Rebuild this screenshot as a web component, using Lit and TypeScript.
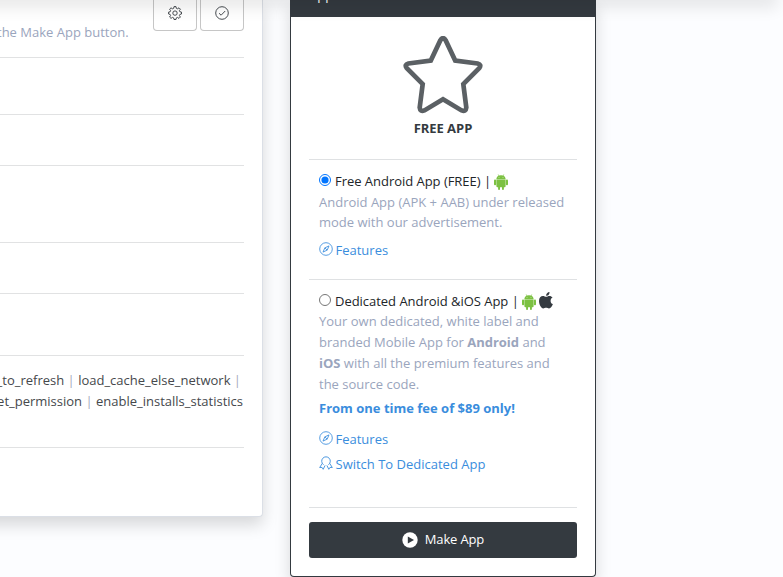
import { LitElement, html, css, svg } from "lit";
import { customElement } from "lit/decorators.js";

const gear = svg`<svg class="icon" width="14" height="14" viewBox="0 0 14 14" fill="none" stroke="currentColor" stroke-width=".9" stroke-linejoin="round"><path d="M6 .6h2l.3 1.700 1.300.5 1.400-1 1.400 1.400-1 1.400.5 1.200 1.600.3v1.900l-1.600.4-.5 1.200 1 1.400-1.400 1.400-1.400-1-1.300.5-.3 1.600H6l-.3-1.600-1.300-.5-1.400 1-1.400-1.400 1-1.400-.5-1.200L.6 8V6.100l1.500-.3.5-1.200-1-1.400L3 1.800l1.400 1 1.300-.5z"/><circle cx="7" cy="7.100" r="2.200"/></svg>`;
const check = svg`<svg class="icon" width="14" height="14" viewBox="0 0 14 14" fill="none" stroke="currentColor" stroke-width=".9"><circle cx="7" cy="7" r="6.300"/><path d="M4 7.200l2.100 2L10.200 5"/></svg>`;
const compass = svg`<svg class="icon" width="14" height="14" viewBox="0 0 14 14" fill="none" stroke="currentColor" stroke-width=".85"><circle cx="7" cy="7" r="6.300"/><path d="M10 3.900L8.200 8.100 4 10.100 5.800 5.900zM5.800 5.900l2.400 2.200"/></svg>`;
const ribbon = svg`<svg class="icon" width="14" height="14" viewBox="0 0 14 14" fill="none" stroke="currentColor" stroke-width=".9" stroke-linejoin="round"><path d="M4.600 8.700A4.300 4.300 0 1 1 9.400 8.700"/><path d="M3.300 7.400L.7 11.500l2.300-.1 1.200 1.900L6.100 9.400M10.700 7.400l2.600 4.100-2.300-.1-1.200 1.900L7.900 9.400"/></svg>`;
const android = svg`<svg class="android" width="14" height="16" viewBox="0 0 14 16" fill="#7cc142"><path d="M2.400 5.200C2.400 3.700 3.200 2.500 4.500 1.800L3.700.4l.4-.2.800 1.400a5.400 5.400 0 0 1 4.200 0L9.900.2l.4.200-.8 1.400c1.300.7 2.100 1.900 2.100 3.400z"/><path d="M2.400 5.500h9.200v6.700a1 1 0 0 1-1 1h-.7v1.900a.9.900 0 0 1-1.900 0v-1.900H6v1.900a.9.900 0 0 1-1.900 0v-1.900h-.7a1 1 0 0 1-1-1z"/><rect y="5.500" width="2.100" height="5.700" rx=".95"/><rect x="11.900" y="5.500" width="2.100" height="5.700" rx=".95"/><circle cx="5" cy="3.600" r=".45" fill="#fff"/><circle cx="9" cy="3.600" r=".45" fill="#fff"/></svg>`;
const apple = svg`<svg class="apple" width="14" height="17" viewBox="0 0 14 17" fill="#343a40"><path d="M11.600 8.900c0-1.500.8-2.600 2-3.300-.8-1.100-1.900-1.600-3.200-1.600-1.400 0-2.300.8-3.200.8S5.100 4 3.900 4C1.800 4 0 5.800 0 9c0 3.600 2.300 7.500 4.200 7.500 1 0 1.600-.7 2.900-.7s1.800.7 2.900.7c1.700 0 3.200-2.600 3.900-4.400-1.500-.6-2.300-1.800-2.300-3.200zM9.700 2.700c.6-.8.9-1.600.8-2.600C8.600.3 7.100 1.700 7.100 3.800c1 .1 2-.4 2.600-1.100z"/></svg>`;
const play = svg`<svg class="play" width="16" height="16" viewBox="0 0 16 16"><circle cx="8" cy="8" r="7.700" fill="#fff"/><path d="M5.800 4.500L12 8l-6.200 3.500z" fill="#343a40"/></svg>`;
const star = svg`<svg class="star" width="80" height="78" viewBox="0 0 80 78" fill="none" stroke="#5b6064" stroke-width="4.700"><path d="M37.400 4.200Q40 0 42.600 4.200L52.200 24.600 74.600 27.500Q78.800 28.600 76.400 32L60.300 48 63.300 71.500Q62.900 76 58.600 74.400L40 63.200 21.400 74.400Q17.100 76 16.700 71.500L19.700 48 3.600 32Q1.200 28.600 5.400 27.500L27.800 24.600z"/></svg>`;

@customElement("app-root")
export class AppRoot extends LitElement {
  static styles = css`
    * { box-sizing: border-box; }
    :host {
      display: block; position: relative; width: 783px; height: 577px; overflow: hidden;
      background: #fcfdff; color: #212529;
      font: 13px/21px "Open Sans", "Noto Sans", sans-serif;
    }
    .page { display: grid; grid-template-columns: 263px 306px; column-gap: 27px; align-items: start; }
    .topshade { position: absolute; left: -20px; top: -20px; width: 798px; height: 20px; box-shadow: 0 8px 16px rgba(0,0,0,.09); }
    .card { background: #fff; box-shadow: 0 8px 16px rgba(0,0,0,.15); }
    .left { height: 517px; margin-left: -40px; padding: 0 18px 0 40px; border: 1px solid #dbdfe6; border-width: 0 1px 1px 0; border-radius: 0 0 4px 0; }
    .row { border-bottom: 1px solid #e1e2e3; }
    .head { display: flex; height: 58px; justify-content: space-between; }
    .hint { padding-top: 22px; color: #9aa5bd; white-space: nowrap; margin-left: -3px; }
    .tools { display: flex; gap: 3px; }
    .tool { width: 44px; height: 31px; border: 1px solid #c6c6c6; border-top: 0; border-radius: 0 0 4px 4px; display: flex; align-items: center; justify-content: center; color: #343a40; padding: 0 0 4px; background: transparent; }
    .r57 { height: 57px; } .r51 { height: 51px; } .r77 { height: 77px; } .r62 { height: 62px; }
    .perms { height: 92px; padding-top: 14px; color: #45484c; display: flex; flex-direction: column; align-items: flex-end; white-space: nowrap; }
    .perms .first { padding-right: 3px; } .perms .second { padding-right: 1px; }
    .bar { color: #a3a9bb; }
    .right { height: 577px; border: 1px solid #343a40; border-radius: 0 0 4px 4px; border-top: 0; display: flex; flex-direction: column; }
    .title { height: 17px; background: #343a40; color: #fff; overflow: hidden; padding-left: 18px; line-height: 20px; }
    .title span { display: block; margin-top: -15px; }
    .hero { margin: 0 18px; height: 143px; padding-top: 19px; display: flex; flex-direction: column; align-items: center; border-bottom: 1px solid #dfe1e3; }
    .star { display: block; }
    .plan { font-weight: 700; letter-spacing: -.05px; margin-top: 4px; color: #343a40; }
    .option { margin: 0 18px; padding: 11px 0 0 10px; border-bottom: 1px solid #dfe1e3; }
    .free { height: 120px; } .dedicated { height: 228px; }
    .pick { display: flex; height: 21px; white-space: nowrap; letter-spacing: -.03px; }
    .dedicated .pick { height: 20px; }
    .pick input { width: 12px; height: 12px; margin: 3px 4px 0 0; }
    .android { margin: 3px 0 0 3px; } .apple { margin: 1px 0 0 3px; }
    .desc { color: #9aa5bd; white-space: nowrap; }
    .free .desc { line-height: 20px; height: 41px; }
    .dedicated .desc { line-height: 21px; }
    .price { color: #3a8ddd; font-weight: 700; margin-top: 3px; }
    .link { display: flex; color: #3a8ddd; height: 21px; gap: 2.500px; white-space: nowrap; }
    .link .icon { margin-top: 2px; }
    .gap7 { margin-top: 7px; } .gap10 { margin-top: 10px; } .gap4 { margin-top: 4px; }
    .make { margin: 14px 18px 0; height: 36px; border: 0; border-radius: 3px; background: #343a40; color: #fff; font: inherit; letter-spacing: -.15px; display: flex; align-items: center; justify-content: center; gap: 7px; padding: 0 0 1px; }
    .play { margin-top: 1px; }
  `;

  render() {
    return html`
      <main class="page">
        <section class="card left">
          <div class="row head">
            <div class="hint">the Make App button.</div>
            <div class="tools"><button class="tool">${gear}</button><button class="tool">${check}</button></div>
          </div>
          <div class="row r57"></div>
          <div class="row r51"></div>
          <div class="row r77"></div>
          <div class="row r51"></div>
          <div class="row r62"></div>
          <div class="row perms">
            <div class="first">pull_to_refresh <span class="bar">|</span> load_cache_else_network <span class="bar">|</span></div>
            <div class="second">get_permission <span class="bar">|</span> enable_installs_statistics</div>
          </div>
        </section>
        <section class="card right">
          <div class="title"><span>App</span></div>
          <div class="hero">${star}<div class="plan">FREE APP</div></div>
          <div class="option free">
            <label class="pick"><input type="radio" name="plan" checked>Free Android App (FREE) | ${android}</label>
            <div class="desc">Android App (APK + AAB) under released<br>mode with our advertisement.</div>
            <div class="link gap7">${compass}<span>Features</span></div>
          </div>
          <div class="option dedicated">
            <label class="pick"><input type="radio" name="plan">Dedicated Android &amp;iOS App | ${android}${apple}</label>
            <div class="desc">Your own dedicated, white label and<br>branded Mobile App for <b>Android</b> and<br><b>iOS</b> with all the premium features and<br>the source code.</div>
            <div class="price">From one time fee of $89 only!</div>
            <div class="link gap10">${compass}<span>Features</span></div>
            <div class="link gap4">${ribbon}<span>Switch To Dedicated App</span></div>
          </div>
          <button class="make">${play}<span>Make App</span></button>
        </section>
      </main>
      <div class="topshade"></div>
    `;
  }
}
